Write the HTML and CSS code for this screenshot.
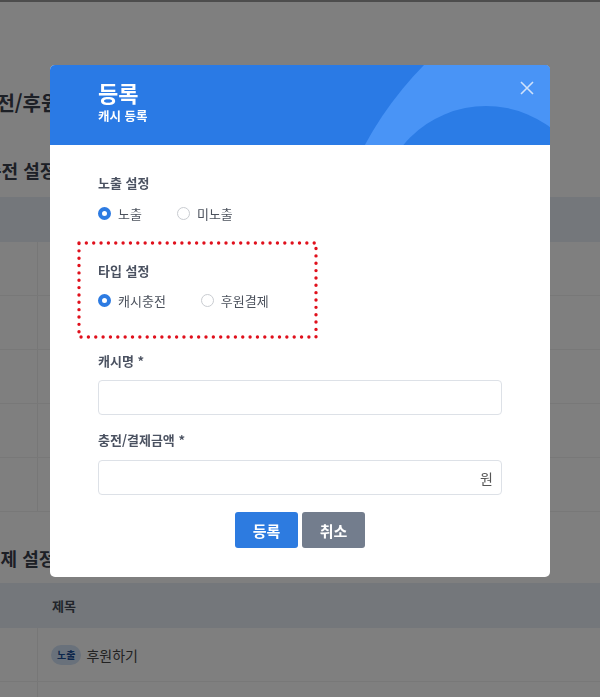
FILE: index.html
```html
<!DOCTYPE html>
<html lang="ko">
<head>
<meta charset="utf-8">
<title>캐시 등록</title>
<link rel="stylesheet" href="styles.css">
</head>
<body>
<div class="page">
  <div class="topbar"></div>
  <h2 class="page-title">충전/후원 설정</h2>
  <h3 class="sec-title sec-charge">충전 설정</h3>
  <div class="tbl">
    <div class="tr th"><div class="td"></div><div class="td">제목</div></div>
    <div class="tr"><div class="td"></div><div class="td"></div></div>
    <div class="tr"><div class="td"></div><div class="td"></div></div>
    <div class="tr"><div class="td"></div><div class="td"></div></div>
    <div class="tr"><div class="td"></div><div class="td"></div></div>
    <div class="tr"><div class="td"></div><div class="td"></div></div>
  </div>
  <h3 class="sec-title sec-pay">결제 설정</h3>
  <div class="tbl tbl-pay">
    <div class="tr th"><div class="td"></div><div class="td">제목</div></div>
    <div class="tr"><div class="td"></div><div class="td"><span class="badge">노출</span>후원하기</div></div>
    <div class="tr"><div class="td"></div><div class="td"></div></div>
  </div>
</div>

<div class="overlay"></div>

<div class="modal">
  <div class="modal-head">
    <svg class="head-deco" width="500" height="80" viewBox="0 0 500 80" aria-hidden="true">
      <circle cx="623" cy="246" r="350" fill="#4994f6"/>
      <circle cx="436" cy="148" r="107" fill="#2b7ce6"/>
    </svg>
    <div class="head-text">
      <div class="modal-title">등록</div>
      <div class="modal-sub">캐시 등록</div>
    </div>
    <button class="close" aria-label="닫기">
      <svg width="14" height="14" viewBox="0 0 14 14"><path d="M1 1L13 13M13 1L1 13" stroke="#cfe2fb" stroke-width="1.6" fill="none"/></svg>
    </button>
  </div>

  <div class="modal-body">
    <div class="group">
      <div class="label">노출 설정</div>
      <div class="radios">
        <label class="radio"><span class="dot on"></span>노출</label>
        <label class="radio"><span class="dot"></span>미노출</label>
      </div>
    </div>

    <div class="group group-type">
      <div class="label">타입 설정</div>
      <div class="radios">
        <label class="radio"><span class="dot on"></span>캐시충전</label>
        <label class="radio"><span class="dot"></span>후원결제</label>
      </div>
    </div>

    <div class="group group-name">
      <div class="label">캐시명 *</div>
      <div class="input"></div>
    </div>

    <div class="group group-amount">
      <div class="label">충전/결제금액 *</div>
      <div class="input"><span class="unit">원</span></div>
    </div>

    <div class="actions">
      <button class="btn btn-primary">등록</button>
      <button class="btn btn-gray">취소</button>
    </div>
  </div>

  <svg class="annot" width="244" height="102" viewBox="0 0 244 102" aria-hidden="true">
    <rect x="2" y="2" width="237" height="94" fill="none" stroke="#e0101c" stroke-width="3.4" stroke-linecap="round" stroke-dasharray="0 7.35"/>
  </svg>
</div>
</body>
</html>
```

FILE: styles.css
```css
* { box-sizing: border-box; }

html, body {
  margin: 0;
  padding: 0;
  width: 600px;
  height: 697px;
  overflow: hidden;
  background: #ffffff;
  font-family: "Noto Sans CJK KR", "Noto Sans", sans-serif;
}

/* ---------- background page ---------- */
.page {
  width: 600px;
}

.topbar {
  height: 2px;
  background: #9a9a9a;
}

.page-title {
  margin: 87px 0 0 -22px;
  font-size: 20px;
  line-height: 28px;
  font-weight: 700;
  color: #3a404c;
}

.sec-title {
  margin: 40px 0 0 -15px;
  font-size: 18px;
  line-height: 26px;
  font-weight: 700;
  color: #3a404c;
}

.sec-pay {
  margin: 33px 0 0 -16px;
}

.tbl {
  margin-top: 14px;
}

.tbl-pay {
  margin-top: 12px;
}

.tr {
  display: grid;
  grid-template-columns: 38px 1fr;
  height: 54px;
  border-bottom: 1px solid #f0f0f0;
}

.tr.th {
  height: 45px;
  background: #e9eff6;
  border-bottom: none;
}

.td {
  display: flex;
  align-items: center;
  padding-left: 14px;
  font-size: 13px;
  color: #333;
}

.tr .td:first-child {
  border-right: 1px solid #eeeeee;
}

.tr.th .td:first-child {
  border-right: none;
}

.th .td {
  font-weight: 700;
  color: #444b57;
}

.badge {
  display: inline-flex;
  align-items: center;
  height: 20px;
  padding: 0 6px;
  margin-right: 5px;
  border-radius: 10px;
  background: #d3e3f7;
  color: #1b4e96;
  font-size: 10px;
  font-weight: 700;
}

.tbl-pay .tr:nth-child(2) .td:last-child {
  font-size: 14px;
  color: #444;
  padding-left: 13px;
}

/* ---------- overlay ---------- */
.overlay {
  position: fixed;
  inset: 0;
  background: rgba(0, 0, 0, 0.5);
}

/* ---------- modal ---------- */
.modal {
  position: fixed;
  left: 50px;
  top: 65px;
  width: 500px;
  height: 512px;
  background: #ffffff;
  border-radius: 5px;
  overflow: hidden;
}

.modal-head {
  position: relative;
  height: 80px;
  background: #2a7ae5;
  padding: 13px 48px 0;
  color: #fff;
}

.head-deco {
  position: absolute;
  left: 0;
  top: 0;
}

.head-text {
  position: relative;
}

.modal-title {
  font-size: 22px;
  line-height: 28px;
  font-weight: 700;
}

.modal-sub {
  font-size: 12.5px;
  line-height: 18px;
  font-weight: 700;
  margin-top: 1px;
}

.close {
  position: absolute;
  right: 16px;
  top: 16px;
  width: 14px;
  height: 14px;
  padding: 0;
  border: none;
  background: none;
  display: block;
}

.close svg { display: block; }

.modal-body {
  padding: 28px 48px 0;
}

.label {
  font-size: 13px;
  line-height: 20px;
  font-weight: 700;
  color: #4b5261;
}

.radios {
  display: flex;
  align-items: center;
  height: 20px;
  margin-top: 10px;
}

.radio {
  display: flex;
  align-items: center;
  font-size: 13px;
  color: #4c525d;
  margin-right: 35px;
}

.dot {
  width: 13px;
  height: 13px;
  border-radius: 50%;
  border: 1px solid #c9ccd1;
  background: #fff;
  margin-right: 7px;
}

.dot.on {
  border: 4px solid #2d7be2;
}

.group-type {
  margin-top: 38px;
}

.group-type .radios {
  margin-top: 9px;
}

.group-name {
  margin-top: 41px;
}

.group-amount {
  margin-top: 15px;
}

.input {
  display: flex;
  align-items: center;
  justify-content: flex-end;
  height: 35px;
  margin-top: 9px;
  border: 1px solid #dde1e7;
  border-radius: 4px;
  padding-right: 8px;
}

.group-amount .input {
  margin-top: 10px;
}

.unit {
  font-size: 14px;
  color: #555;
}

.actions {
  display: flex;
  justify-content: center;
  gap: 4px;
  margin-top: 17px;
}

.btn {
  width: 63px;
  height: 36px;
  border: none;
  border-radius: 3px;
  color: #fff;
  font-family: inherit;
  font-size: 15px;
  font-weight: 700;
  padding: 0;
}

.btn-primary { background: #2d7be0; }
.btn-gray { background: #737d8d; }

.annot {
  position: absolute;
  left: 27px;
  top: 176px;
}
```
